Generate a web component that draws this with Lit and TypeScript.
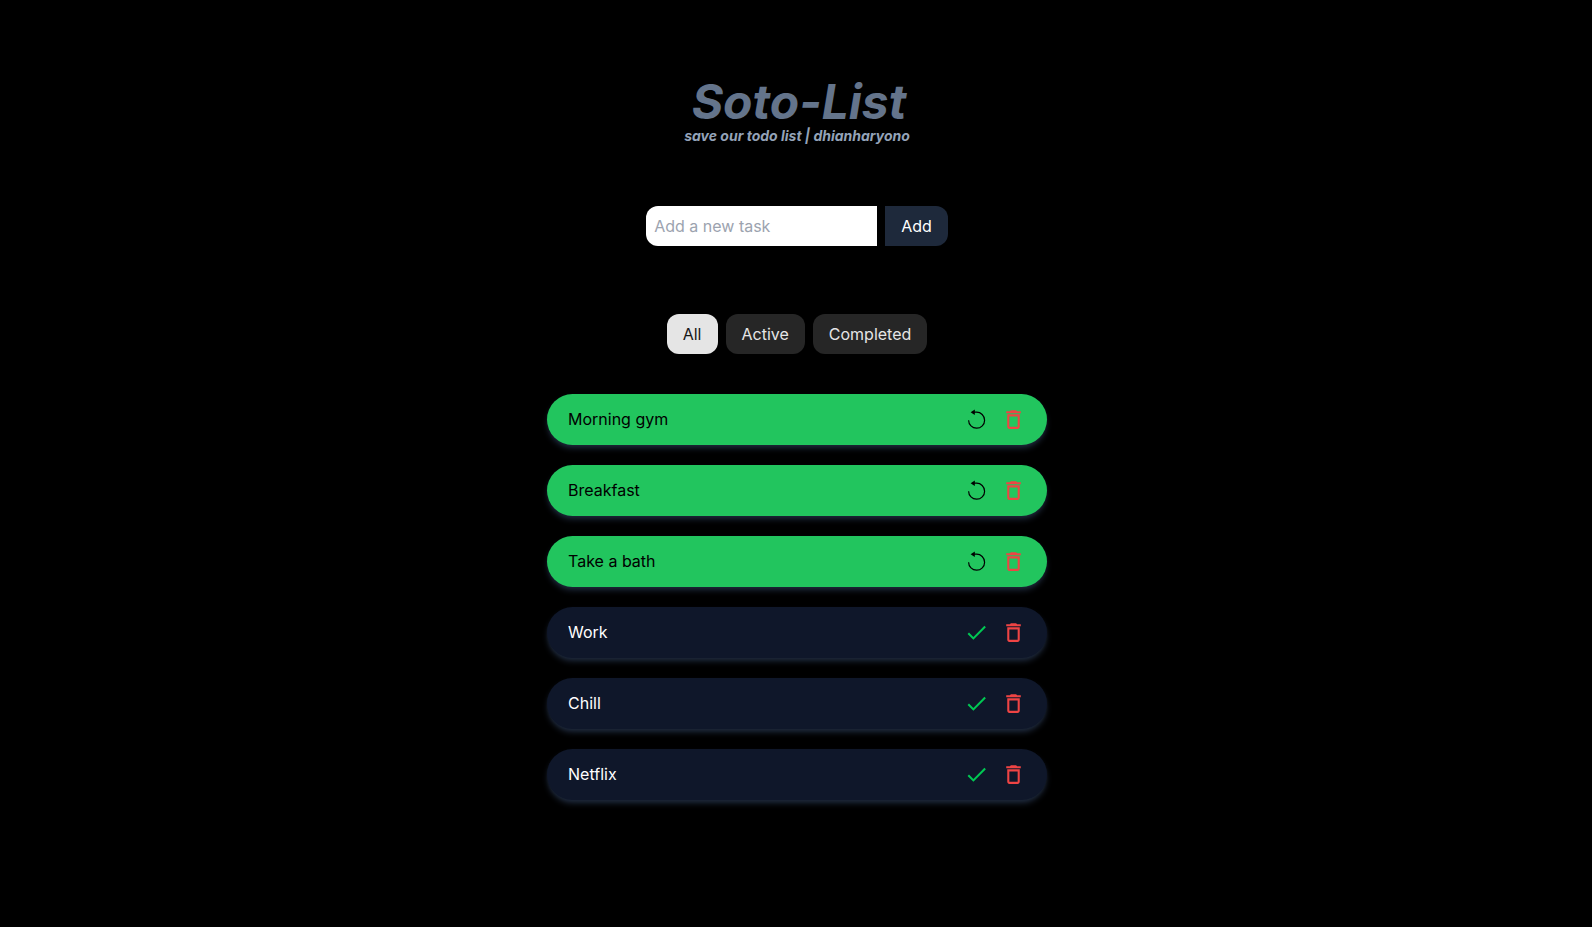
import { LitElement, html, css } from "lit";
import { customElement, state } from "lit/decorators.js";

type Filter = "All" | "Active" | "Completed";
interface Task {
  text: string;
  done: boolean;
}

const undoIcon = html`<svg viewBox="0 0 25 25" aria-hidden="true">
  <path d="M4.6 13.2 A8 8 0 1 0 12.5 5.2 H9" fill="none" stroke="currentColor" stroke-width="1.2" />
  <path d="M6.6 5.2 L10.8 2.4 V8 Z" fill="currentColor" />
</svg>`;

const doneIcon = html`<svg viewBox="0 0 24 24" aria-hidden="true">
  <path fill="currentColor" d="M9 16.2L4.8 12l-1.4 1.4L9 19 21 7l-1.4-1.4L9 16.2z" />
</svg>`;

const trashIcon = html`<svg viewBox="0 0 24 24" aria-hidden="true">
  <path
    fill="currentColor"
    d="M6 19c0 1.1.9 2 2 2h8c1.1 0 2-.9 2-2V7H6v12zM8 9h8v10H8V9zm7.5-5l-1-1h-5l-1 1H5v2h14V4h-3.5z"
  />
</svg>`;

@customElement("app-root")
export class AppRoot extends LitElement {
  static styles = css`
    :host {
      display: block;
      box-sizing: border-box;
      min-height: 100vh;
      padding: 78px 20px 40px 22px;
      background: #000;
      color: #fff;
      font: 400 16px/24px Inter, "Noto Sans", sans-serif;
    }
    *,
    *::before {
      box-sizing: border-box;
    }
    .page {
      display: flex;
      flex-direction: column;
      align-items: center;
    }
    .title {
      margin: 0;
      padding-left: 4px;
      font-size: 48px;
      line-height: 48px;
      font-weight: 700;
      font-style: oblique 20deg;
      color: #64748b;
    }
    .subtitle {
      margin: 0;
      font-size: 14px;
      line-height: 20px;
      font-weight: 700;
      font-style: oblique 20deg;
      color: #94a3b8;
    }
    .entry {
      display: flex;
      gap: 8px;
      margin-top: 60px;
    }
    button,
    input {
      margin: 0;
      border: 0;
      font: inherit;
    }
    button {
      cursor: pointer;
    }
    .field {
      width: 231px;
      padding: 8px;
      border-radius: 12px 0 0 12px;
      background: #fff;
      color: #000;
    }
    .field::placeholder {
      color: #9ca3af;
      opacity: 1;
    }
    .add {
      padding: 8px 16px;
      border-radius: 0 12px 12px 0;
      background: #1e293b;
      color: #fff;
    }
    .filters {
      display: flex;
      gap: 8px;
      margin-top: 68px;
    }
    .filter {
      padding: 8px 16px;
      border-radius: 12px;
      background: #262626;
      color: #e5e5e5;
    }
    .filter[aria-pressed="true"] {
      background: #e5e5e5;
      color: #171717;
    }
    .tasks {
      display: flex;
      flex-direction: column;
      gap: 20px;
      width: 100%;
      max-width: 500px;
      margin: 40px 0 0;
      padding: 0;
      list-style: none;
    }
    .task {
      display: flex;
      align-items: flex-start;
      gap: 12px;
      padding: 13px 21px;
      border-radius: 26px;
      background: #0f172a;
      box-shadow: 0 4px 6px -1px #1e293b, 0 2px 4px -2px #1e293b;
    }
    .task.done {
      background: #22c55e;
      color: #000;
    }
    .label {
      flex: 1;
    }
    .icon {
      display: block;
      width: 25px;
      height: 25px;
      padding: 0;
      background: none;
      color: #ef4444;
    }
    .icon svg {
      display: block;
      width: 100%;
      height: 100%;
    }
    .icon.check {
      color: #00c853;
    }
    .icon.undo {
      color: #000;
    }
  `;

  @state() private filter: Filter = "All";
  @state() private tasks: Task[] = [
    { text: "Morning gym", done: true },
    { text: "Breakfast", done: true },
    { text: "Take a bath", done: true },
    { text: "Work", done: false },
    { text: "Chill", done: false },
    { text: "Netflix", done: false },
  ];

  private add(e: Event) {
    e.preventDefault();
    const input = this.renderRoot.querySelector("input") as HTMLInputElement;
    const text = input.value.trim();
    if (!text) return;
    this.tasks = [...this.tasks, { text, done: false }];
    input.value = "";
  }

  private toggle(task: Task) {
    this.tasks = this.tasks.map((t) => (t === task ? { ...t, done: !t.done } : t));
  }

  private remove(task: Task) {
    this.tasks = this.tasks.filter((t) => t !== task);
  }

  render() {
    const shown = this.tasks.filter(
      (t) => this.filter === "All" || t.done === (this.filter === "Completed")
    );
    return html`<main class="page">
      <h1 class="title">Soto-List</h1>
      <p class="subtitle">save our todo list | dhianharyono</p>
      <form class="entry" @submit=${this.add}>
        <input class="field" type="text" aria-label="Add a new task" placeholder="Add a new task" />
        <button class="add" type="submit">Add</button>
      </form>
      <div class="filters">
        ${(["All", "Active", "Completed"] as Filter[]).map(
          (f) => html`<button
            class="filter"
            type="button"
            aria-pressed=${this.filter === f ? "true" : "false"}
            @click=${() => (this.filter = f)}
          >${f}</button>`
        )}
      </div>
      <ul class="tasks">
        ${shown.map(
          (t) => html`<li class="task ${t.done ? "done" : ""}">
            <span class="label">${t.text}</span>
            <button
              class="icon ${t.done ? "undo" : "check"}"
              type="button"
              aria-label=${t.done ? "Restore task" : "Complete task"}
              @click=${() => this.toggle(t)}
            >${t.done ? undoIcon : doneIcon}</button>
            <button class="icon" type="button" aria-label="Delete task" @click=${() => this.remove(t)}>
              ${trashIcon}
            </button>
          </li>`
        )}
      </ul>
    </main>`;
  }
}
